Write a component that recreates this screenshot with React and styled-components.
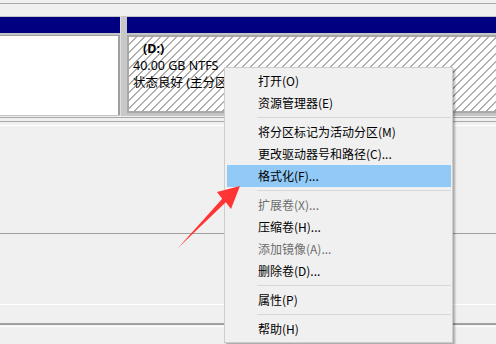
import styled, { createGlobalStyle } from "styled-components";

const GlobalStyle = createGlobalStyle`
  html, body {
    margin: 0;
    padding: 0;
    background: #f0f0f0;
  }
  body {
    font-family: "Noto Sans", "Noto Sans CJK SC", sans-serif;
  }
`;

const menuItems = [
  { label: "打开(O)" },
  { label: "资源管理器(E)" },
  { sep: true },
  { label: "将分区标记为活动分区(M)" },
  { label: "更改驱动器号和路径(C)..." },
  { label: "格式化(F)...", active: true },
  { sep: true },
  { label: "扩展卷(X)...", disabled: true },
  { label: "压缩卷(H)..." },
  { label: "添加镜像(A)...", disabled: true },
  { label: "删除卷(D)..." },
  { sep: true },
  { label: "属性(P)" },
  { sep: true },
  { label: "帮助(H)" },
];

function App() {
  return (
    <>
      <GlobalStyle />
      <Page>
        <TopStrip />
        <DiskRow>
          <Column $width="120px">
            <Header />
            <BlankPanel />
          </Column>
          <Divider />
          <Column $grow>
            <Header />
            <HatchPanel>
              <VolName>(D:)</VolName>
              <VolLine>40.00 GB NTFS</VolLine>
              <VolLine>状态良好 (主分区)</VolLine>
            </HatchPanel>
          </Column>
        </DiskRow>
        <Rule $tone="#a9a9a9" $mt="1px" />
        <Rule $tone="#a9a9a9" $mt="3px" />
        <Rule $tone="#ffffff" $mt="3px" />
        <Rule $tone="#a0a0a0" $mt="107px" />
        <Rule $tone="#ffffff" $mt="70px" />
        <Rule $tone="#a0a0a0" $mt="18px" $h="2px" />
        <Rule $tone="#ffffff" $mt="1px" />

        <Menu>
          {menuItems.map((item, i) =>
            item.sep ? (
              <Separator key={i} />
            ) : (
              <Item key={i} $active={item.active} $disabled={item.disabled}>
                {item.label}
              </Item>
            )
          )}
        </Menu>

        <Arrow viewBox="170 180 75 75" width="75" height="75">
          <polygon
            points="178,248 222.2,198.7 217,192 240,186 231,209 225.8,202.3"
            fill="#ff3535"
          />
        </Arrow>
      </Page>
    </>
  );
}

const Page = styled.div`
  position: relative;
  width: 496px;
  height: 344px;
  overflow: hidden;
  background: #f0f0f0;
`;

const TopStrip = styled.div`
  height: 12px;
  margin-top: 3px;
  border-top: 1px solid #a9a9a9;
  background: #f0f0f0;
`;

const DiskRow = styled.div`
  display: flex;
  height: 100px;
  background: #c4c4c4;
`;

const Column = styled.div`
  display: flex;
  flex-direction: column;
  width: ${(p) => p.$width || "auto"};
  flex: ${(p) => (p.$grow ? 1 : "none")};
`;

const Header = styled.div`
  height: 16px;
  margin-top: 1px;
  background: #000080;
`;

const BlankPanel = styled.div`
  flex: 1;
  margin: 2px 0 1px 0;
  background: #ffffff;
  border-top: 1px solid #a0a0a0;
  border-right: 2px solid #a0a0a0;
`;

const Divider = styled.div`
  width: 6px;
  background: #c8c8c8;
  border-left: 1px solid #e0e0e0;
`;

const HatchPanel = styled.div`
  flex: 1;
  margin: 2px 0 3px 0;
  border: 2px solid #a8a8a8;
  border-right: none;
  padding: 3px 0 0 4px;
  background: repeating-linear-gradient(
    135deg,
    #ffffff 0 4.6px,
    #adadad 4.6px 5.66px
  );
  font-size: 12.5px;
  line-height: 17px;
  color: #000;
`;

const VolName = styled.div`
  font-weight: bold;
  padding-left: 10px;
`;

const VolLine = styled.div`
  white-space: nowrap;
`;

const Rule = styled.div`
  height: ${(p) => p.$h || "1px"};
  margin-top: ${(p) => p.$mt};
  background: ${(p) => p.$tone};
`;

const Menu = styled.div`
  position: absolute;
  left: 224px;
  top: 67px;
  width: 229px;
  box-sizing: border-box;
  padding: 2px 1px 2px 2px;
  background: #f0f0f0;
  border: 1px solid #cccccc;
  box-shadow: 2px 2px 2px rgba(0, 0, 0, 0.3);
  font-family: "Noto Sans CJK SC", "Noto Sans", sans-serif;
  font-size: 12px;
`;

const Item = styled.div`
  height: 22px;
  line-height: 22px;
  padding-left: 31px;
  color: ${(p) => (p.$disabled ? "#6d6d6d" : "#000")};
  background: ${(p) => (p.$active ? "#91c9f7" : "transparent")};
  white-space: nowrap;
`;

const Separator = styled.div`
  height: 1px;
  margin: 3px 0 3px 30px;
  background: #d7d7d7;
`;

const Arrow = styled.svg`
  position: absolute;
  left: 170px;
  top: 180px;
  pointer-events: none;
`;

export default App;
